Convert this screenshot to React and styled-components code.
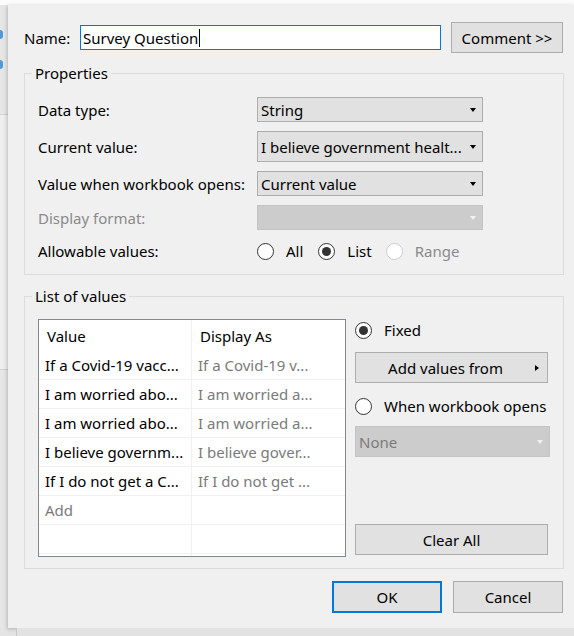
import React from "react";
import styled, { createGlobalStyle } from "styled-components";

const GlobalStyle = createGlobalStyle`
  html, body { margin: 0; padding: 0; }
  body {
    width: 574px; height: 636px; overflow: hidden; background: #e4e4e4;
    font-family: "Noto Sans", "Open Sans", sans-serif; font-size: 15px; color: #000;
  }
  * { box-sizing: border-box; }
`;

const Screen = styled.div`
  display: flex; flex-direction: column; width: 574px; height: 636px;
`;
const TopStrip = styled.div`
  height: 5px; background: #fbfbfb; flex: none;
`;
const Middle = styled.div`
  display: flex; height: 623px; flex: none;
`;
const SidePane = styled.div`
  width: 8px; flex: none; background: #e6e6e6; display: flex; flex-direction: column;
  padding-top: 25px; gap: 21px;
`;
const SideDot = styled.span`
  width: 3px; height: 9px; border-radius: 0 5px 5px 0; background: #2b86d6; opacity: .8;
`;
const SideBox = styled.div`
  margin-top: 24px; height: 256px; background: #eeeeee;
  border-top: 1px solid #d2d2d2; border-bottom: 1px solid #d2d2d2;
`;
const BottomShade = styled.div`
  flex: 1; background: #e2e2e2; margin-left: 16px; border-left: 1px solid #c8c8c8;
`;

const Dialog = styled.div`
  flex: 1; min-width: 0; background: #f0f0f0; display: flex; flex-direction: column;
  padding: 17px 10px 0 16px; box-shadow: -1px 1px 4px rgba(0,0,0,.22);
`;

const NameRow = styled.div`
  display: flex; align-items: center; height: 31px;
`;
const NameLabel = styled.div`
  width: 56px;
`;
const TextBox = styled.div`
  width: 361px; height: 25px; background: #fff; border: 1px solid #0078d7;
  padding: 0 2px; display: flex; align-items: center; white-space: nowrap;
`;
const Caret = styled.span`
  display: inline-block; width: 1px; height: 18px; background: #000; margin-left: 1px;
`;
const Button = styled.button`
  font: inherit; color: #000; background: #e1e1e1;
  border: ${(p) => (p.$default ? "2px solid #0078d7" : "1px solid #adadad")};
  width: ${(p) => p.$w || 110}px; height: ${(p) => p.$h || 32}px;
  margin-left: ${(p) => p.$ml || 0}px; padding: 0; flex: none;
`;

const Group = styled.fieldset`
  margin: ${(p) => p.$mt}px 0 0 0; width: 540px; border: 1px solid #dcdcdc;
  padding: ${(p) => p.$pad};
  min-width: 0;
`;
const Legend = styled.legend`
  padding: 0 3px; margin-left: -6px; line-height: 18px;
`;

const PropList = styled.div`
  display: flex; flex-direction: column; gap: 9px;
`;
const PropRow = styled.div`
  display: grid; grid-template-columns: 219px 226px; align-items: center;
  color: ${(p) => (p.$disabled ? "#8a8a8a" : "#000")};
`;
const Select = styled.div`
  height: ${(p) => p.$h || 25}px; display: flex; align-items: center;
  padding: 0 6px 0 3px; white-space: nowrap; overflow: hidden;
  background: ${(p) => (p.$disabled ? "#cccccc" : "#e1e1e1")};
  border: 1px solid ${(p) => (p.$disabled ? "#c4c4c4" : "#adadad")};
  color: ${(p) => (p.$disabled ? "#7a7a7a" : "#000")};
`;
const SelectText = styled.span`
  flex: 1; overflow: hidden;
`;
const DownArrow = styled.span`
  width: 0; height: 0; flex: none; margin-left: 4px;
  border-left: 3.5px solid transparent; border-right: 3.5px solid transparent;
  border-top: 4px solid ${(p) => (p.$disabled ? "#f2f2f2" : "#000")};
`;
const RightArrow = styled.span`
  width: 0; height: 0; flex: none;
  border-top: 3.5px solid transparent; border-bottom: 3.5px solid transparent;
  border-left: 4px solid #000;
`;

const RadioGroup = styled.div`
  display: flex; align-items: center; height: 24px;
`;
const RadioItem = styled.label`
  display: flex; align-items: center; gap: 12px; margin-right: ${(p) => p.$mr || 0}px;
  color: ${(p) => (p.$disabled ? "#8a8a8a" : "#000")};
  height: 22px;
`;
const RadioDot = styled.span`
  width: 17px; height: 17px; border-radius: 50%; background: #fff; flex: none;
  border: 1px solid ${(p) => (p.$disabled ? "#cccccc" : "#333")};
  display: grid; place-items: center;
  &::after {
    content: ""; width: 9px; height: 9px; border-radius: 50%;
    background: ${(p) => (p.$checked ? "#333" : "transparent")};
  }
`;

const ListBody = styled.div`
  display: grid; grid-template-columns: 308px 195px; gap: 9px;
`;
const Table = styled.div`
  height: 238px; border: 1px solid #828790; background: #fff; overflow: hidden;
`;
const TRow = styled.div`
  display: grid; grid-template-columns: 152px 1fr; height: ${(p) => (p.$head ? 31 : 29)}px;
  border-bottom: ${(p) => (p.$head ? "none" : "1px solid #f0f0f0")};
`;
const Cell = styled.div`
  display: flex; align-items: center; white-space: nowrap; overflow: hidden;
  padding-left: ${(p) => (p.$head ? 8 : 6)}px;
  color: ${(p) => (p.$muted ? "#7a7a7a" : "#000")};
  & + & { border-left: 1px solid #f0f0f0; }
`;

const SideCol = styled.div`
  display: flex; flex-direction: column;
`;
const Spaced = styled.div`
  margin-top: ${(p) => p.$mt}px;
`;
const MenuButton = styled(Button)`
  display: grid; grid-template-columns: 1fr auto; align-items: center;
  padding: 0 8px 0 0; margin-top: 11px;
`;
const BottomButton = styled(Button)`
  margin-top: auto; margin-bottom: 2px;
`;

const Footer = styled.div`
  display: flex; justify-content: flex-end; gap: 11px; margin: 12px 1px 0 0;
`;

const rows = [
  ["If a Covid-19 vacc...", "If a Covid-19 v..."],
  ["I am worried abo...", "I am worried a..."],
  ["I am worried abo...", "I am worried a..."],
  ["I believe governm...", "I believe gover..."],
  ["If I do not get a C...", "If I do not get ..."],
];

function Radio({ label, checked, disabled, mr }) {
  return (
    <RadioItem $disabled={disabled} $mr={mr}>
      <RadioDot $checked={checked} $disabled={disabled} />
      {label}
    </RadioItem>
  );
}

export default function App() {
  return (
    <Screen>
      <GlobalStyle />
      <TopStrip />
      <Middle>
        <SidePane>
          <SideDot />
          <SideDot />
          <SideBox />
        </SidePane>
        <Dialog>
          <NameRow>
            <NameLabel>Name:</NameLabel>
            <TextBox>Survey Question<Caret /></TextBox>
            <Button $w={112} $h={31} $ml={10}>Comment &gt;&gt;</Button>
          </NameRow>

          <Group $mt={11} $pad="15px 13px 11px 13px">
            <Legend>Properties</Legend>
            <PropList>
              <PropRow>
                <span>Data type:</span>
                <Select><SelectText>String</SelectText><DownArrow /></Select>
              </PropRow>
              <PropRow>
                <span>Current value:</span>
                <Select $h={31}><SelectText>I believe government healt...</SelectText><DownArrow /></Select>
              </PropRow>
              <PropRow>
                <span>Value when workbook opens:</span>
                <Select><SelectText>Current value</SelectText><DownArrow /></Select>
              </PropRow>
              <PropRow $disabled>
                <span>Display format:</span>
                <Select $disabled><SelectText /><DownArrow $disabled /></Select>
              </PropRow>
              <PropRow>
                <span>Allowable values:</span>
                <RadioGroup>
                  <Radio label="All" mr={15} />
                  <Radio label="List" checked mr={14} />
                  <Radio label="Range" disabled />
                </RadioGroup>
              </PropRow>
            </PropList>
          </Group>

          <Group $mt={12} $pad="14px 13px 11px 13px">
            <Legend>List of values</Legend>
            <ListBody>
              <Table>
                <TRow $head>
                  <Cell $head>Value</Cell>
                  <Cell $head>Display As</Cell>
                </TRow>
                {rows.map(([v, d], i) => (
                  <TRow key={i}>
                    <Cell>{v}</Cell>
                    <Cell $muted>{d}</Cell>
                  </TRow>
                ))}
                <TRow>
                  <Cell $muted>Add</Cell>
                  <Cell />
                </TRow>
                <TRow>
                  <Cell />
                  <Cell />
                </TRow>
                <TRow>
                  <Cell />
                  <Cell />
                </TRow>
              </Table>
              <SideCol>
                <Radio label="Fixed" checked />
                <MenuButton $w={193} $h={31}>
                  <span>Add values from</span>
                  <RightArrow />
                </MenuButton>
                <Spaced $mt={12}>
                  <Radio label="When workbook opens" />
                </Spaced>
                <Spaced $mt={9}>
                  <Select $h={31} $disabled><SelectText>None</SelectText><DownArrow $disabled /></Select>
                </Spaced>
                <BottomButton $w={193} $h={31}>Clear All</BottomButton>
              </SideCol>
            </ListBody>
          </Group>

          <Footer>
            <Button $default>OK</Button>
            <Button>Cancel</Button>
          </Footer>
        </Dialog>
      </Middle>
      <BottomShade />
    </Screen>
  );
}
